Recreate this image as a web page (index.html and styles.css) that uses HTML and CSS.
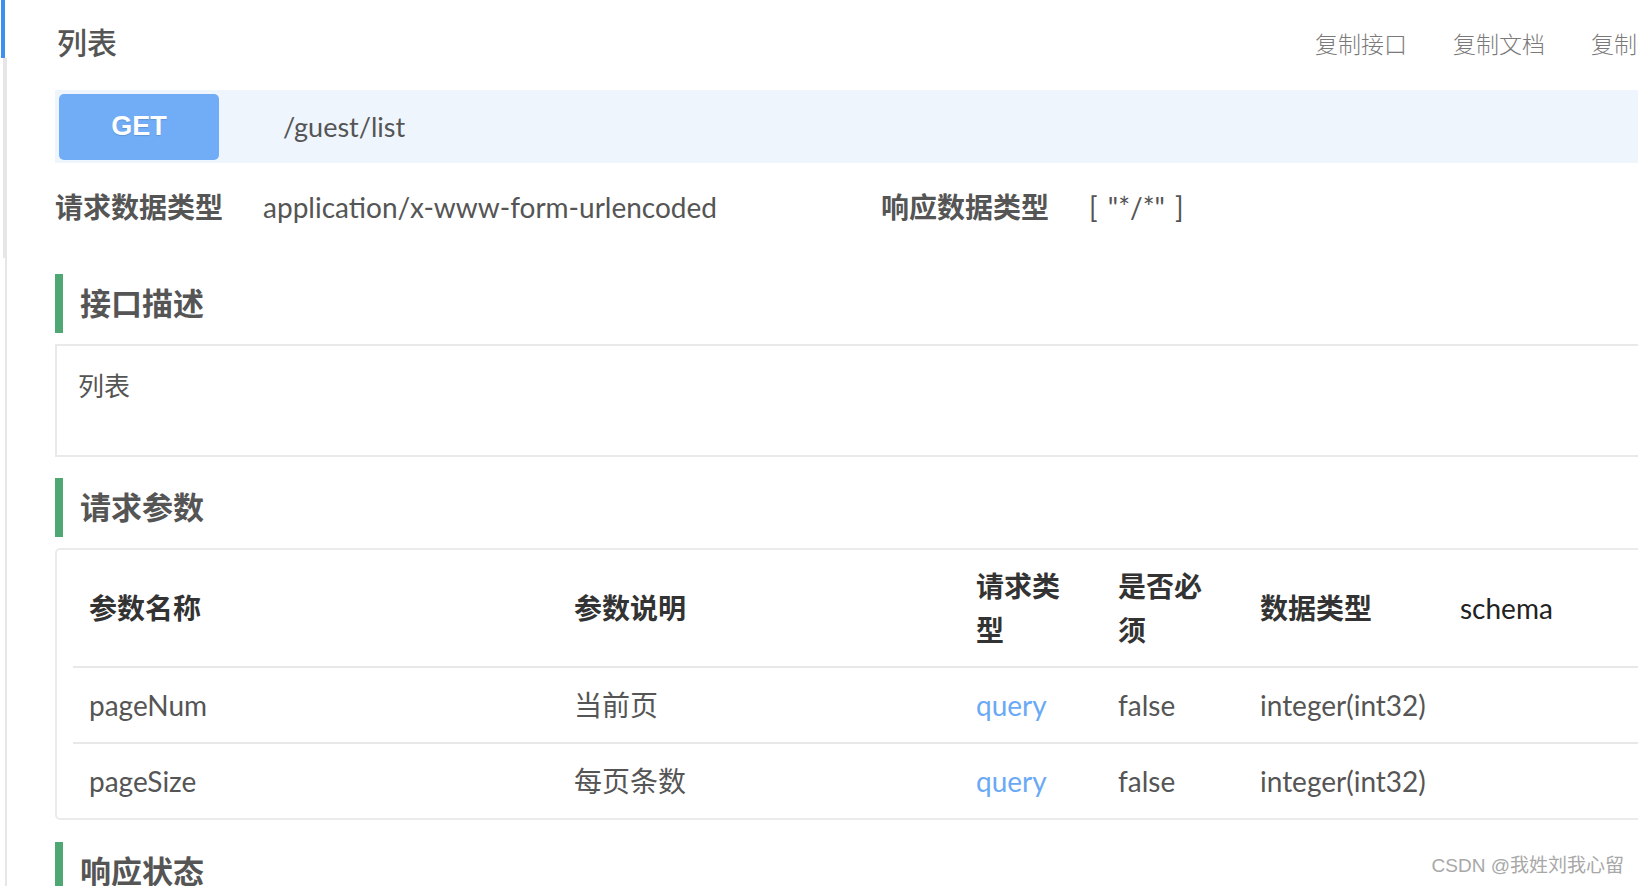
FILE: index.html
```html
<!DOCTYPE html>
<html lang="zh-CN">
<head>
<meta charset="utf-8">
<title>列表</title>
<link rel="stylesheet" href="styles.css">
</head>
<body>
<div class="page">
  <div class="rail">
    <div class="rail-active"></div>
    <div class="rail-item"></div>
    <div class="rail-rest"></div>
  </div>
  <main class="main">
    <div class="title-row">
      <h1 class="title">列表</h1>
      <div class="actions">
        <span class="action">复制接口</span>
        <span class="action">复制文档</span>
        <span class="action">复制全部</span>
      </div>
    </div>

    <div class="method-bar">
      <span class="method">GET</span>
      <span class="path">/guest/list</span>
    </div>

    <div class="meta-row">
      <div class="meta meta-req">
        <span class="meta-label">请求数据类型</span>
        <span class="meta-value">application/x-www-form-urlencoded</span>
      </div>
      <div class="meta">
        <span class="meta-label">响应数据类型</span>
        <span class="meta-value">[ "*/*" ]</span>
      </div>
    </div>

    <h2 class="section-title">接口描述</h2>
    <div class="desc-box">列表</div>

    <h2 class="section-title">请求参数</h2>
    <div class="table-box">
      <table class="params">
        <colgroup>
          <col class="c-name">
          <col class="c-desc">
          <col class="c-in">
          <col class="c-req">
          <col class="c-type">
          <col class="c-schema">
        </colgroup>
        <thead>
          <tr>
            <th>参数名称</th>
            <th>参数说明</th>
            <th>请求类型</th>
            <th>是否必须</th>
            <th>数据类型</th>
            <th class="th-latin">schema</th>
          </tr>
        </thead>
        <tbody>
          <tr>
            <td>pageNum</td>
            <td>当前页</td>
            <td class="in">query</td>
            <td>false</td>
            <td>integer(int32)</td>
            <td></td>
          </tr>
          <tr>
            <td>pageSize</td>
            <td>每页条数</td>
            <td class="in">query</td>
            <td>false</td>
            <td>integer(int32)</td>
            <td></td>
          </tr>
        </tbody>
      </table>
    </div>

    <h2 class="section-title">响应状态</h2>
  </main>
</div>
<div class="watermark">CSDN @我姓刘我心留</div>
</body>
</html>
```

FILE: styles.css
```css
html, body {
  margin: 0;
  padding: 0;
  background: #ffffff;
  overflow: hidden;
  height: 886px;
}

body {
  font-family: Lato, "Noto Sans CJK SC", sans-serif;
  color: #555555;
}

.page {
  display: flex;
  width: 1760px;
  height: 886px;
}

.rail {
  flex: none;
  width: 7px;
  display: flex;
  flex-direction: column;
}

.rail-active {
  height: 58px;
  width: 4px;
  margin-left: 1px;
  background: #3f8ef0;
}

.rail-item {
  height: 200px;
  width: 4px;
  margin-left: 3px;
  background: #e6e6e6;
}

.rail-rest {
  flex: 1;
  width: 2px;
  margin-left: 5px;
  background: #e6e6e6;
}

.main {
  flex: none;
  width: 1640px;
  margin-left: 48px;
}

.title-row {
  height: 90px;
  display: flex;
  align-items: center;
  padding-right: 12px;
}

.title {
  flex: 1;
  margin: 0 0 8px 2px;
  font-size: 30px;
  font-weight: 500;
  color: #555555;
}

.actions {
  display: flex;
  gap: 46px;
  margin-bottom: 4px;
}

.action {
  font-size: 23px;
  color: #7a7a7a;
  font-weight: 300;
}

.method-bar {
  height: 73px;
  background: #eff5fd;
  display: flex;
  align-items: center;
  padding-left: 4px;
}

.method {
  width: 160px;
  height: 66px;
  border-radius: 5px;
  background: #70adf6;
  color: #ffffff;
  font-family: "Liberation Sans", Arial, sans-serif;
  font-weight: 700;
  font-size: 27px;
  display: flex;
  align-items: center;
  justify-content: center;
  text-shadow: 0 1px 1px rgba(0, 0, 0, 0.15);
}

.path {
  margin-left: 64px;
  font-size: 27px;
  color: #555555;
}

.meta-row {
  height: 99px;
  display: flex;
  align-items: center;
  padding-bottom: 14px;
  box-sizing: border-box;
}

.meta {
  display: flex;
  align-items: baseline;
  gap: 40px;
}

.meta-req {
  width: 826px;
}

.meta-label {
  font-size: 28px;
  font-weight: 700;
  color: #555555;
}

.meta-value {
  font-size: 28px;
  color: #555555;
  word-spacing: 3px;
}

.section-title {
  margin: 12px 0 11px 0;
  height: 59px;
  box-sizing: border-box;
  border-left: 8px solid #4fa873;
  padding-left: 17px;
  padding-bottom: 5px;
  display: flex;
  align-items: center;
  font-size: 31px;
  font-weight: 700;
  color: #555555;
}

.desc-box {
  height: 113px;
  box-sizing: border-box;
  border: 2px solid #e9e9e9;
  padding: 20px 21px;
  font-size: 26px;
  line-height: 40px;
  margin-bottom: 21px;
}

.table-box {
  border: 2px solid #ebebeb;
  border-radius: 5px;
  padding: 0 16px;
  margin-bottom: 22px;
}

.params {
  border-collapse: collapse;
  table-layout: fixed;
  width: 100%;
}

.c-name { width: 485px; }
.c-desc { width: 402px; }
.c-in { width: 142px; }
.c-req { width: 142px; }
.c-type { width: 200px; }
.c-schema { width: auto; }

.params th,
.params td {
  text-align: left;
  padding: 14px 16px 14px 16px;
  font-size: 28px;
  line-height: 44px;
  vertical-align: middle;
}

.params th {
  font-weight: 700;
  color: #333333;
  border-bottom: 2px solid #e8e8e8;
}

.params th.th-latin {
  font-weight: 400;
  color: #222222;
}

.params tbody tr:first-child td {
  border-bottom: 2px solid #e8e8e8;
}

.params td {
  color: #555555;
  padding-top: 15px;
  padding-bottom: 15px;
}

.params td.in {
  color: #6aa9f5;
}

.watermark {
  position: absolute;
  right: 14px;
  bottom: 9px;
  font-family: "Liberation Sans", Arial, "Noto Sans CJK SC", sans-serif;
  font-size: 19px;
  color: #a8a8a8;
}
```
